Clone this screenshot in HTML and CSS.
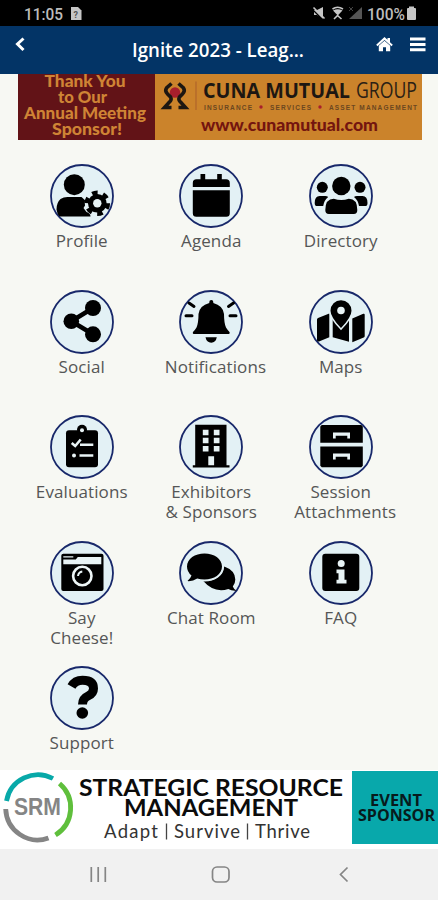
FILE: index.html
```html
<!DOCTYPE html>
<html lang="en">
<head>
<meta charset="utf-8">
<title>Ignite 2023</title>
<link rel="stylesheet" href="styles.css">
</head>
<body>
<div class="screen">
  <div class="status">
    <svg width="438" height="26" viewBox="0 0 438 26">
      <text class="clock" x="24" y="20" textLength="39" lengthAdjust="spacingAndGlyphs">11:05</text>
      <path class="st" d="M71 7h7l3.500 3.500V20H71z"/>
      <text class="tiny" x="73.500" y="17.500">?</text>
      <path class="st" d="M314 10h3l6-3v12l-6-4h-3z"/>
      <path class="cut" d="M312 9l12 12"/><path class="stl" d="M313.500 7.500l11 11"/>
      <path class="stl" d="M332.500 9q5-3.500 10.500 0"/><path class="st" d="M333 10.500q4.700-2.500 9.500 0l-4.700 5z"/><path class="stl" d="M334 19l3.500-3.500 4 3.500"/>
      <path class="dim" d="M362 7v12h-13z"/><path class="diml" d="M349 7l4 4M353 7l-4 4"/>
      <text class="clock" x="367" y="20" textLength="38" lengthAdjust="spacingAndGlyphs">100%</text>
      <path class="st" d="M407 9q0-1 1-1h1V6.500h5V8h1q1 0 1 1v10q0 1-1 1h-7q-1 0-1-1z"/>
    </svg>
  </div>
  <header class="header">
    <svg width="438" height="48" viewBox="0 0 438 48">
      <path class="back" d="M23.500 12.500L17.500 18l6 6"/>
      <text class="title" x="132" y="30.500" textLength="172" lengthAdjust="spacingAndGlyphs">Ignite 2023 - Leag...</text>
      <path class="white" d="M384.500 11l3 2.800V12h2.500v4.200l2.800 2.500-1.300 1.500-7-6.300-7 6.300-1.300-1.500z"/>
      <path class="white" d="M384.500 14.800l5.700 5V25.200h-4.200v-4h-3v4h-4.200v-5.400z"/>
      <path class="white" d="M410 11.500h15.500v3H410zM410 17h15.500v3H410zM410 22.300h15.500v3H410z"/>
    </svg>
  </header>
  <section class="banner">
    <svg width="404" height="66" viewBox="0 0 404 66">
      <rect class="maroon" width="137" height="66"/>
      <rect class="gold" x="137" width="267" height="66"/>
      <g class="thanks">
        <text x="26.500" y="13" textLength="81" lengthAdjust="spacingAndGlyphs">Thank You</text>
        <text x="40" y="28.700" textLength="49" lengthAdjust="spacingAndGlyphs">to Our</text>
        <text x="6" y="44.700" textLength="122" lengthAdjust="spacingAndGlyphs">Annual Meeting</text>
        <text x="34" y="60.500" textLength="70" lengthAdjust="spacingAndGlyphs">Sponsor!</text>
      </g>
      <circle class="red" cx="157" cy="18.500" r="5.200"/>
      <path class="knot" d="M153.500 9.500l-5 4.500q-2 3 1 6l3 3q2 3-2 6l-4 4.500h7M160.500 9.500l5 4.500q2 3-1 6l-3 3q-2 3 2 6l4 4.500h-7"/>
      <path class="rule" d="M178 7.500V36"/>
      <text class="cuna" x="185" y="24" textLength="147" lengthAdjust="spacingAndGlyphs">CUNA MUTUAL</text>
      <text class="group" x="338" y="24" textLength="61" lengthAdjust="spacingAndGlyphs">GROUP</text>
      <g class="sub">
        <text x="186" y="35.500" textLength="48">INSURANCE</text>
        <text x="252" y="35.500" textLength="41">SERVICES</text>
        <text x="311" y="35.500" textLength="88">ASSET MANAGEMENT</text>
      </g>
      <circle class="red" cx="243" cy="33" r="1.700"/><circle class="red" cx="302" cy="33" r="1.700"/>
      <text class="url" x="183" y="56.500" textLength="177" lengthAdjust="spacingAndGlyphs">www.cunamutual.com</text>
    </svg>
  </section>
  <main class="grid">
    <div class="item"><svg class="icon" viewBox="0 0 64 64"><circle class="disc" cx="32" cy="32" r="31"/>
      <circle cx="24.300" cy="20.700" r="10.500"/>
      <path d="M9.500 52.500q-2.500-2.500-3-7 0-7 4-10.500 3-2 7-2h14q3 2 5 6l-3 5 3 4q4 1 4 4.500z"/>
      <circle class="gap" cx="47.300" cy="39.300" r="9.500"/>
      <circle cx="47.300" cy="39.300" r="9.300"/><circle class="teeth" cx="47.300" cy="39.300" r="10.300"/>
      <circle class="pale" cx="47.300" cy="39.300" r="4.200"/></svg><div class="label">Profile</div></div>
    <div class="item"><svg class="icon" viewBox="0 0 64 64"><circle class="disc" cx="32" cy="32" r="31"/>
      <path d="M13.800 23v-4q0-3.700 3.700-3.700h4V10h4.700v5.300h12V10h4.600v5.300h4.300q3.700 0 3.700 3.700v4zM13.800 26.300h37v23q0 3.500-3.500 3.500h-30q-3.500 0-3.500-3.500z"/></svg><div class="label">Agenda</div></div>
    <div class="item"><svg class="icon" viewBox="0 0 64 64"><circle class="disc" cx="32" cy="32" r="31"/>
      <circle cx="32.300" cy="22" r="9.200"/><circle cx="13.300" cy="23.300" r="5.500"/><circle cx="51" cy="23.300" r="5.500"/>
      <path d="M16.300 46q0-11.300 8.500-11.300 7.500 2.500 15 0 8.500 0 8.500 11.300 0 4-3.500 4h-25q-3.500 0-3.500-4zM5.700 39q0-7 5-7h5.500q2 0 3 1-4 3-5 9H7.500q-1.800 0-1.800-3zM58.500 39q0-7-5-7H48q-2 0-3 1 4 3 5 9h6.700q1.800 0 1.800-3z"/></svg><div class="label">Directory</div></div>

    <div class="item"><svg class="icon" viewBox="0 0 64 64"><circle class="disc" cx="32" cy="32" r="31"/>
      <path class="line4" d="M43 18L21.300 31.300 43 44.300"/><circle cx="21.300" cy="31.300" r="7.800"/><circle cx="43" cy="18" r="8"/><circle cx="43" cy="44.300" r="8"/></svg><div class="label">Social</div></div>
    <div class="item"><svg class="icon" viewBox="0 0 64 64"><circle class="disc" cx="32" cy="32" r="31"/>
      <path d="M30.300 13v-1q0-2 2-2t2 2v1Q44 15.500 45 24q0 9 2 13.500 1.500 2.500 3.500 4.500.8 2-1.500 2H15.500q-2.300 0-1.500-2 2-2 3.500-4.500 2-4.500 2-13.500 1-8.500 10.800-11zM26.500 47.300h11.300q-1 5.400-5.600 5.400t-5.700-5.400z"/>
      <path class="line3" d="M7 25.700h6M51 25.700h6M10 13l5 3.500M54.500 13l-5 3.500"/></svg><div class="label">Notifications</div></div>
    <div class="item"><svg class="icon" viewBox="0 0 64 64"><circle class="disc" cx="32" cy="32" r="31"/>
      <path d="M8 29.500q0-1 1-1.500l11.300-4.500v23.700L10 51.500q-2 .5-2-1.500zM23.700 24.500L40 29v22.700l-16.300-4.500zM43.300 28.500l11-4.700q1.400-.5 1.400 1V46q0 1-1 1.500l-11.400 4.700z"/>
      <path class="pin" d="M32 38Q21.500 27 21.500 20.700a10.500 10.500 0 0 1 21 0Q42.500 27 32 38z"/><circle class="pale" cx="32" cy="20.500" r="3.800"/></svg><div class="label">Maps</div></div>

    <div class="item"><svg class="icon" viewBox="0 0 64 64"><circle class="disc" cx="32" cy="32" r="31"/>
      <rect x="16" y="15.200" width="32" height="37" rx="3"/><circle cx="32" cy="14.800" r="5"/><circle class="pale" cx="32" cy="15.300" r="2"/>
      <path class="pline" d="M21.700 28l3.500 3 5.500-6.500M30 29.700h13.300M29.500 40.500h13.800"/><circle class="pale" cx="24" cy="40.500" r="2"/></svg><div class="label">Evaluations</div></div>
    <div class="item"><svg class="icon" viewBox="0 0 64 64"><circle class="disc" cx="32" cy="32" r="31"/>
      <path d="M16.200 9.800h31.300v40.500h3v2.200H13.800v-2.200h2.400z"/>
      <path class="pale" d="M23.800 14.800h5.700v5.400h-5.700zM34.800 14.800h5.700v5.400h-5.700zM23.800 22.800h5.700v5.400h-5.700zM34.800 22.800h5.700v5.400h-5.700zM23.800 31h5.700v5.400h-5.700zM34.800 31h5.700v5.400h-5.700zM29.300 41.300h5.800v9h-5.800z"/></svg><div class="label">Exhibitors<br>&amp; Sponsors</div></div>
    <div class="item"><svg class="icon" viewBox="0 0 64 64"><circle class="disc" cx="32" cy="32" r="31"/>
      <path d="M11.300 11.500l1.500-1.500h39.500l1.500 1.500v16.300H11.300zM11.300 31.600h42.500v19.200l-1.500 1.500H12.800l-1.500-1.500z"/>
      <path class="pale" d="M24 17.500h17v6h-2.700v-2.700H26.700v2.700H24zM24 38.500h17v6h-2.700v-2.700H26.700v2.700H24z"/></svg><div class="label">Session<br>Attachments</div></div>

    <div class="item"><svg class="icon" viewBox="0 0 64 64"><circle class="disc" cx="32" cy="32" r="31"/>
      <rect x="11.300" y="12.700" width="42.200" height="37.300" rx="2"/><path class="pale" d="M13.300 18.500h12.500l2-2.500h23.500v7.300h-38zM13.300 15.300h10v1.200h-10z"/>
      <circle class="lens" cx="32.300" cy="35" r="9.200"/><path class="glint" d="M28 35q.5-4 4.300-4.500"/></svg><div class="label">Say<br>Cheese!</div></div>
    <div class="item"><svg class="icon" viewBox="0 0 64 64"><circle class="disc" cx="32" cy="32" r="31"/>
      <path d="M24 39.800Q42 41 45.300 25.500q11 4 11 13 0 4-2.500 7 1 3 4 4.200-5 .5-8.500-1.700Q35 52.500 24 39.800z"/>
      <path class="chat" d="M25.500 12.500c9.500 0 17.500 5.300 17.500 13s-8 13-17.500 13q-4 0-7.300-1-4.500 3-9.700 2.600 3-2.500 4-5.500-4.500-3.800-4.500-9.100c0-7.700 8-13 17.500-13z"/></svg><div class="label">Chat Room</div></div>
    <div class="item"><svg class="icon" viewBox="0 0 64 64"><circle class="disc" cx="32" cy="32" r="31"/>
      <rect x="13.300" y="12.700" width="37" height="37.300" rx="3"/><circle class="pale" cx="32.200" cy="22.500" r="3.500"/><path class="pale" d="M27.500 28.500h8v10.300h2V42.500h-10v-3.700h2v-6.500h-2z"/></svg><div class="label">FAQ</div></div>

    <div class="item"><svg class="icon" viewBox="0 0 64 64"><circle class="disc" cx="32" cy="32" r="31"/>
      <path class="quest" d="M21.500 20.500Q25 14.300 32.500 14.300 43.500 14.300 43.500 22.500q0 5-5.500 7.500-5.500 2.500-5.500 8.500"/><circle cx="32.300" cy="47" r="5.800"/></svg><div class="label">Support</div></div>
  </main>
  <footer class="sponsor">
    <svg width="438" height="79" viewBox="0 0 438 79">
      <path class="arc teal" d="M6.500 31A32 32 0 0 1 53 8.500"/>
      <path class="arc green" d="M59.500 13.500A32 32 0 0 1 55.500 65"/>
      <path class="arc gray" d="M5.700 39A32 32 0 0 0 48.500 68"/>
      <text class="srm" x="14" y="45" textLength="47" lengthAdjust="spacingAndGlyphs">SRM</text>
      <text class="strat" x="79" y="26" textLength="264" lengthAdjust="spacingAndGlyphs">STRATEGIC RESOURCE</text>
      <text class="strat" x="124" y="45.500" textLength="174" lengthAdjust="spacingAndGlyphs">MANAGEMENT</text>
      <text class="adapt" x="104" y="68" textLength="54">Adapt</text>
      <text class="adapt" x="174" y="68" textLength="66">Survive</text>
      <text class="adapt" x="255" y="68" textLength="55">Thrive</text>
      <path class="bar" d="M166.500 53.500v16M247.500 53.500v16"/>
      <rect class="tealbox" x="352" y="1" width="86" height="73"/>
      <text class="event" x="370" y="35.500" textLength="52" lengthAdjust="spacingAndGlyphs">EVENT</text>
      <text class="event" x="358" y="50.500" textLength="77" lengthAdjust="spacingAndGlyphs">SPONSOR</text>
    </svg>
  </footer>
  <nav class="nav">
    <svg width="438" height="51" viewBox="0 0 438 51">
      <path class="navline" d="M91.300 18v15M98.200 18v15M105.300 18v15M347.500 18.500l-7 7 7 7"/>
      <rect class="navline" x="212.500" y="18" width="16.500" height="15" rx="4.500"/>
    </svg>
  </nav>
</div>
</body>
</html>
```
FILE: styles.css
```css
* { box-sizing: border-box; }
body { margin: 0; background: #f7f8f3; font-family: "Open Sans", sans-serif; }
svg { display: block; }
.screen { width: 438px; height: 900px; display: flex; flex-direction: column; overflow: hidden; }
.status { height: 26px; background: #000; }
.header { height: 48px; background: #033466; }
.banner { height: 66px; padding-left: 18px; }
.clock { font: 500 17px Roboto, sans-serif; fill: #bcbcbc; }
.tiny { font: bold 9px Roboto, sans-serif; fill: #555; }
.st { fill: #c6c6c6; }
.stl { fill: none; stroke: #c6c6c6; stroke-width: 1.6; }
.cut { stroke: #000; stroke-width: 1.2; }
.dim { fill: #555; }
.diml { stroke: #444; }
.back { fill: none; stroke: #fff; stroke-width: 3; }
.title { font: 600 19px "Open Sans", sans-serif; fill: #fff; }
.white { fill: #fff; }

.maroon { fill: #621317; }
.gold { fill: #cb832b; }
.thanks { font: 900 16.5px Lato, sans-serif; fill: #cf8435; }
.red { fill: #a81f2c; }
.knot { fill: none; stroke: #1d1712; stroke-width: 3.6; }
.rule { stroke: #b0642a; stroke-width: 1.2; }
.cuna { font: bold 22px "Open Sans", sans-serif; fill: #1d1712; }
.group { font: 22px "Open Sans", sans-serif; fill: #2a2015; }
.sub { font: bold 6.5px "Liberation Sans", sans-serif; fill: #6b4720; }
.url { font: 900 16px Lato, sans-serif; fill: #74150f; }

.grid {
  height: 630px;
  padding: 24px 0 0 17px;
  display: grid;
  grid-template-columns: repeat(3, 129.5px);
  grid-template-rows: repeat(4, 125.6px) 1fr;
}
.item { display: flex; flex-direction: column; align-items: center; }
.icon { width: 64px; height: 64px; flex: none; }
.label {
  width: 93px;
  margin-top: 3px;
  font-size: 17px;
  font-weight: 400;
  line-height: 20px;
  letter-spacing: 0.1px;
  text-align: center;
  color: #555656;
}
.disc { fill: #e3f1f5; stroke: #18286a; stroke-width: 1.8; }
.pale { fill: #e8f3f5; }
.gap { fill: #e3f1f5; stroke: #e3f1f5; stroke-width: 6; }
.teeth { fill: none; stroke: #000; stroke-width: 5; stroke-dasharray: 5.4 5.386; }
.line4 { fill: none; stroke: #000; stroke-width: 4.5; }
.line3 { stroke: #000; stroke-width: 3; stroke-linecap: round; }
.pin { stroke: #e3f1f5; stroke-width: 3; paint-order: stroke; }
.pline { fill: none; stroke: #e8f3f5; stroke-width: 2.6; }
.lens { fill: #000; stroke: #eef6f7; stroke-width: 2.6; }
.glint { fill: none; stroke: #e8f3f5; stroke-width: 2; }
.chat { stroke: #e3f1f5; stroke-width: 4; paint-order: stroke; }
.quest { fill: none; stroke: #000; stroke-width: 9; }

.sponsor { height: 79px; background: #fff; }
.arc { fill: none; stroke-width: 4.8; }
.teal { stroke: #08a9a9; }
.green { stroke: #5fbf3c; }
.gray { stroke: #858585; }
.srm { font: bold 23px "Liberation Sans", sans-serif; fill: #858585; }
.strat { font: 700 23px Lato, sans-serif; fill: #0b0b0b; }
.adapt { font: 18.5px Lato, sans-serif; fill: #333; }
.bar { stroke: #444; stroke-width: 1.3; }
.tealbox { fill: #08a8ab; }
.event { font: bold 15.5px "Open Sans", sans-serif; fill: #071b1d; }
.nav { height: 51px; background: #f1f1f1; }
.navline { fill: none; stroke: #858585; stroke-width: 1.7; }
```
